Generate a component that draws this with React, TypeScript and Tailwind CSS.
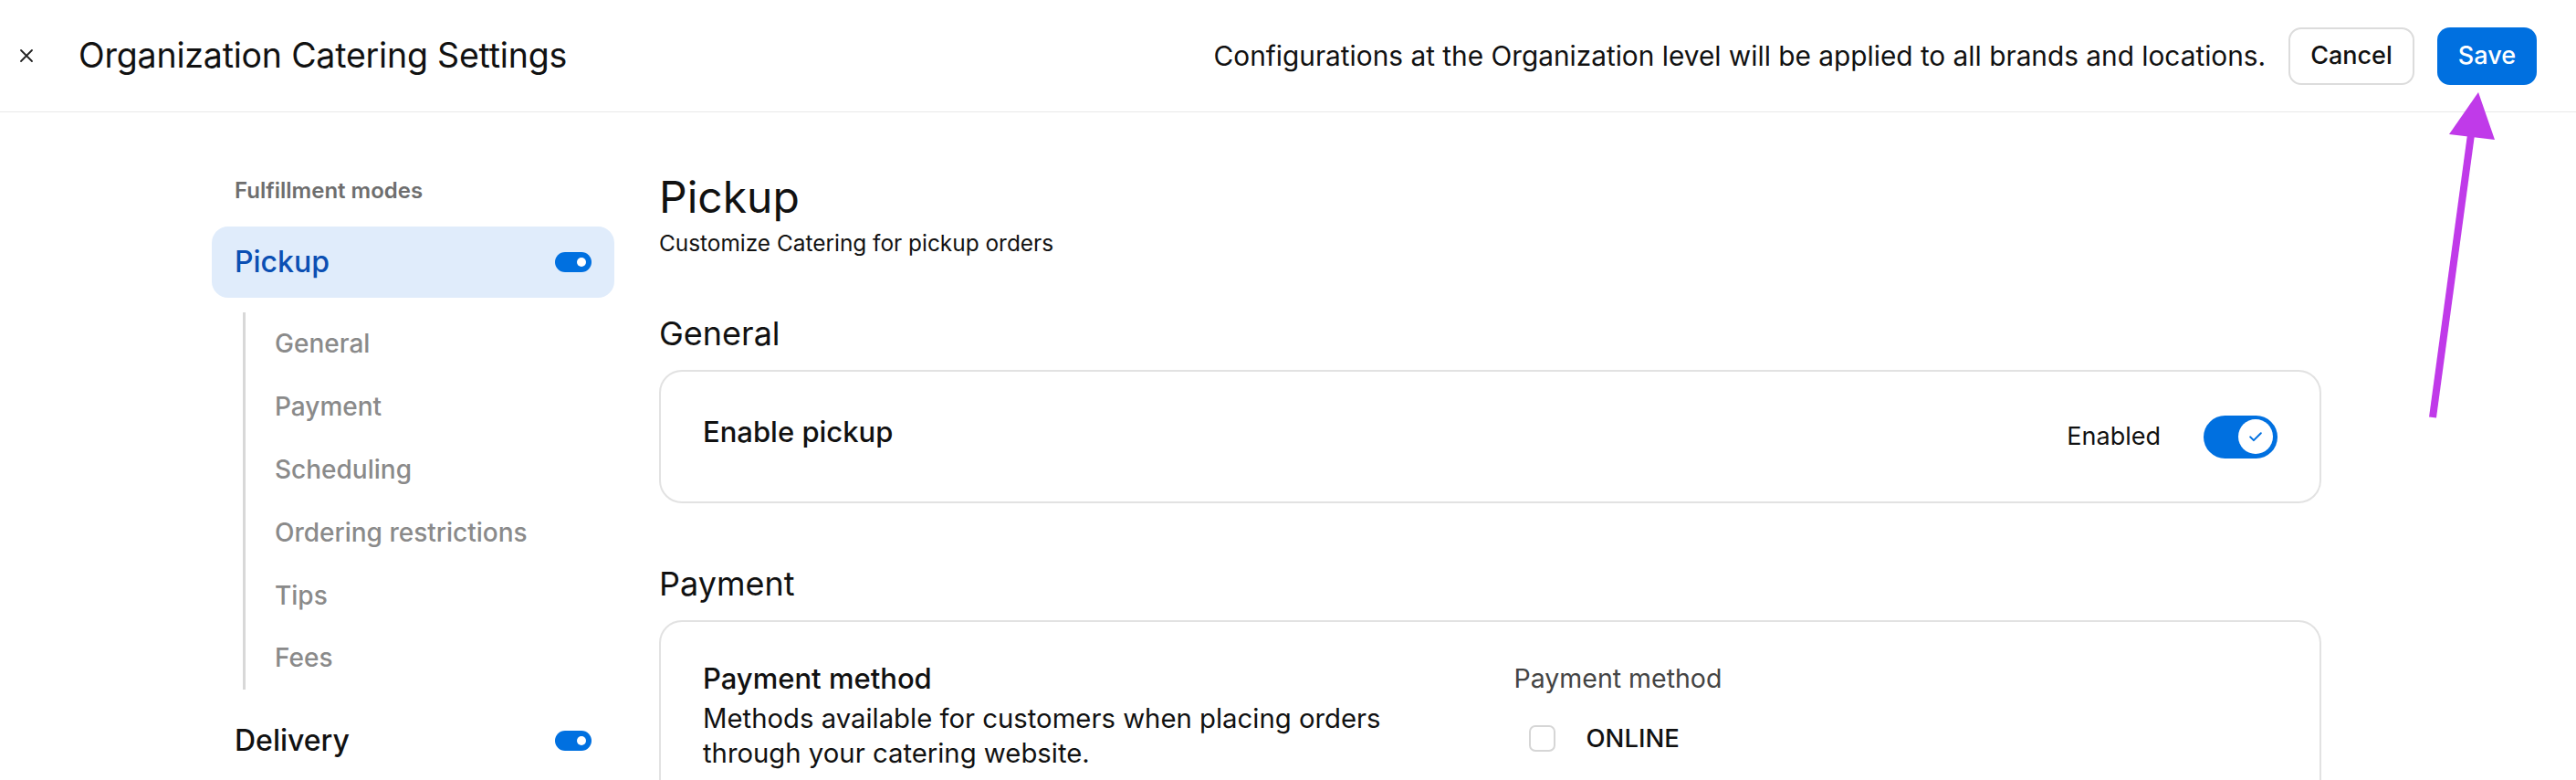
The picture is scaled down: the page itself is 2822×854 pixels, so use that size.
import React from "react";

const font = { fontFamily: "Inter, 'Noto Sans', sans-serif" };

function SmallToggle() {
  return (
    <div className="w-[40px] h-[22px] rounded-full bg-[#0070e0] flex items-center justify-end pr-[6px]">
      <div className="w-[10px] h-[10px] rounded-full bg-white" />
    </div>
  );
}

function BigToggle() {
  return (
    <div className="w-[81px] h-[47px] rounded-full bg-[#0070e0] flex items-center justify-end pr-[5px]">
      <div className="w-[38px] h-[38px] rounded-full bg-white flex items-center justify-center">
        <svg width="20" height="20" viewBox="0 0 24 24" fill="none" stroke="#0070e0" strokeWidth="2.4" strokeLinecap="round" strokeLinejoin="round">
          <path d="M5 12.5l4.5 4.5L19 7.5" />
        </svg>
      </div>
    </div>
  );
}

export default function App() {
  const subItems = ["General", "Payment", "Scheduling", "Ordering restrictions", "Tips", "Fees"];
  return (
    <div className="relative w-[2822px] h-[854px] overflow-hidden bg-white text-[#111]" style={font}>
      {/* Header */}
      <header className="h-[123px] border-b border-[#e9e9e9] flex items-center pl-[20px] pr-[43px]">
        <svg width="18" height="18" viewBox="0 0 18 18" stroke="#222" strokeWidth="1.8" strokeLinecap="round">
          <path d="M3 3l12 12M15 3L3 15" />
        </svg>
        <h1 className="ml-[48px] text-[37.5px] leading-[44px] font-normal tracking-[-0.2px] text-[#111]">Organization Catering Settings</h1>
        <div className="ml-auto flex items-center gap-[25px]">
          <span className="text-[29.8px] text-[#111]">Configurations at the Organization level will be applied to all brands and locations.</span>
          <button className="h-[63px] px-[22px] rounded-[14px] border-2 border-[#dcdcdc] bg-white text-[27px] font-medium text-[#111]">Cancel</button>
          <button className="h-[63px] px-[23px] rounded-[14px] bg-[#0070e0] text-[27px] font-medium text-white">Save</button>
        </div>
      </header>

      <div className="flex pl-[232px]">
        {/* Sidebar */}
        <aside className="w-[441px] pt-[72px]">
          <div className="pl-[25px] text-[24px] leading-[28px] font-semibold text-[#6e6e6e]">Fulfillment modes</div>
          <div className="mt-[25px] h-[78px] rounded-[18px] bg-[#e0ecfb] flex items-center justify-between pl-[25px] pr-[25px]">
            <span className="text-[32px] font-medium text-[#0b4fb3]">Pickup</span>
            <SmallToggle />
          </div>
          <div className="mt-[16px] ml-[34px] border-l-[3px] border-[#d8d8d8] pl-[32px] flex flex-col">
            {subItems.map((s) => (
              <div key={s} className="h-[68.8px] flex items-center text-[28px] font-medium text-[#8a8a8a]">{s}</div>
            ))}
          </div>
          <div className="mt-[17px] h-[78px] flex items-center justify-between pl-[25px] pr-[25px]">
            <span className="text-[32px] font-medium text-[#111]">Delivery</span>
            <SmallToggle />
          </div>
        </aside>

        {/* Main */}
        <main className="ml-[49px] w-[1821px] pt-[64px]">
          <h2 className="text-[48px] leading-[58px] font-normal text-[#111]">Pickup</h2>
          <p className="mt-[6px] text-[24.4px] leading-[30px] text-[#111]">Customize Catering for pickup orders</p>

          <h3 className="mt-[62px] text-[36px] leading-[44px] font-normal">General</h3>
          <div className="mt-[18px] h-[146px] rounded-[25px] border-2 border-[#e2e2e2] flex items-center justify-between px-[46px]">
            <span className="text-[31px] font-medium -mt-[10px]">Enable pickup</span>
            <div className="flex items-center gap-[47px]">
              <span className="text-[27px]">Enabled</span>
              <BigToggle />
            </div>
          </div>

          <h3 className="mt-[66px] text-[36px] leading-[44px] font-normal">Payment</h3>
          <div className="mt-[18px] h-[300px] rounded-[25px] border-2 border-[#e2e2e2] px-[46px] pt-[42px] grid grid-cols-2 gap-x-[52px]">
            <div>
              <div className="text-[31px] leading-[40px] font-medium">Payment method</div>
              <div className="mt-[5px] text-[29.3px] leading-[38px] text-[#111]">
                Methods available for customers when placing orders through your catering website.
              </div>
            </div>
            <div>
              <div className="text-[28.5px] leading-[40px] text-[#444]">Payment method</div>
              <div className="mt-[25px] flex items-center pl-[16px]">
                <div className="w-[29px] h-[29px] rounded-[7px] border-2 border-[#d6d6d6] bg-white" />
                <span className="ml-[34px] text-[27.5px] font-medium">ONLINE</span>
              </div>
            </div>
          </div>
        </main>
      </div>

      {/* Annotation arrow */}
      <svg className="absolute left-0 top-0 pointer-events-none" width="2822" height="854">
        <line x1="2665" y1="457" x2="2708" y2="140" stroke="#c03ae9" strokeWidth="8" />
        <polygon points="2715,101 2683,147 2733,153" fill="#c03ae9" />
      </svg>
    </div>
  );
}
